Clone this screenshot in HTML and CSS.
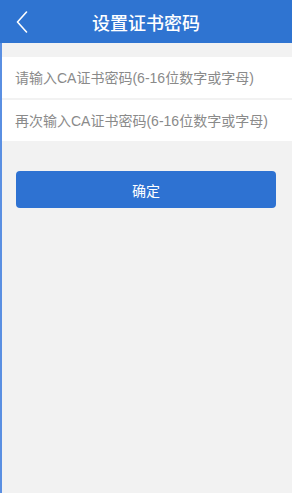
FILE: index.html
```html
<!DOCTYPE html>
<html>
<head>
    <title>设置证书密码</title>
    <meta charset="UTF-8">
    <link rel="stylesheet" href="styles.css">
</head>
<body>

<div class="header">
    <span class="back">
        <svg width="12" height="22" viewBox="0 0 12 22"><path d="M10.5 1 L1.5 11 L10.5 21" fill="none" stroke="#fff" stroke-width="1.6" stroke-linecap="round" stroke-linejoin="round"/></svg>
    </span>
    <h1>设置证书密码</h1>
</div>

<div class="content">
    <form>
        <div class="field">
            <input type="password" placeholder="请输入CA证书密码(6-16位数字或字母)">
        </div>
        <div class="field">
            <input type="password" placeholder="再次输入CA证书密码(6-16位数字或字母)">
        </div>
        <div class="actions">
            <button type="button" class="submit">确定</button>
        </div>
    </form>
</div>

</body>
</html>
```

FILE: styles.css
```css
html, body {
    margin: 0;
    height: 100%;
}

body {
    display: flex;
    flex-direction: column;
    font-family: "Liberation Sans", "Noto Sans CJK SC", sans-serif;
    background-color: #f2f2f2;
}

.header {
    position: relative;
    height: 43px;
    display: flex;
    align-items: center;
    justify-content: center;
    background-color: #2f74d1;
}

.header h1 {
    margin: 0;
    font-size: 18px;
    font-weight: 500;
    color: #fff;
}

.back {
    position: absolute;
    left: 16px;
    top: 11px;
    line-height: 0;
}

.content {
    flex: 1;
    border-left: 2px solid #5a8fe2;
    padding-top: 14px;
}

.field {
    height: 41px;
    margin-bottom: 2px;
    background-color: #fff;
    display: flex;
    align-items: center;
}

.field input {
    border: 0;
    outline: 0;
    width: 100%;
    padding: 0 0 0 13px;
    font-family: inherit;
    font-size: 14px;
    background: transparent;
}

.field input::placeholder {
    color: #8a8a8a;
}

.actions {
    padding: 28px 16px 0 14px;
}

.submit {
    width: 100%;
    height: 37px;
    border: 0;
    border-radius: 4px;
    background-color: #2e72d2;
    color: #fff;
    font-family: inherit;
    font-size: 14px;
}
```
